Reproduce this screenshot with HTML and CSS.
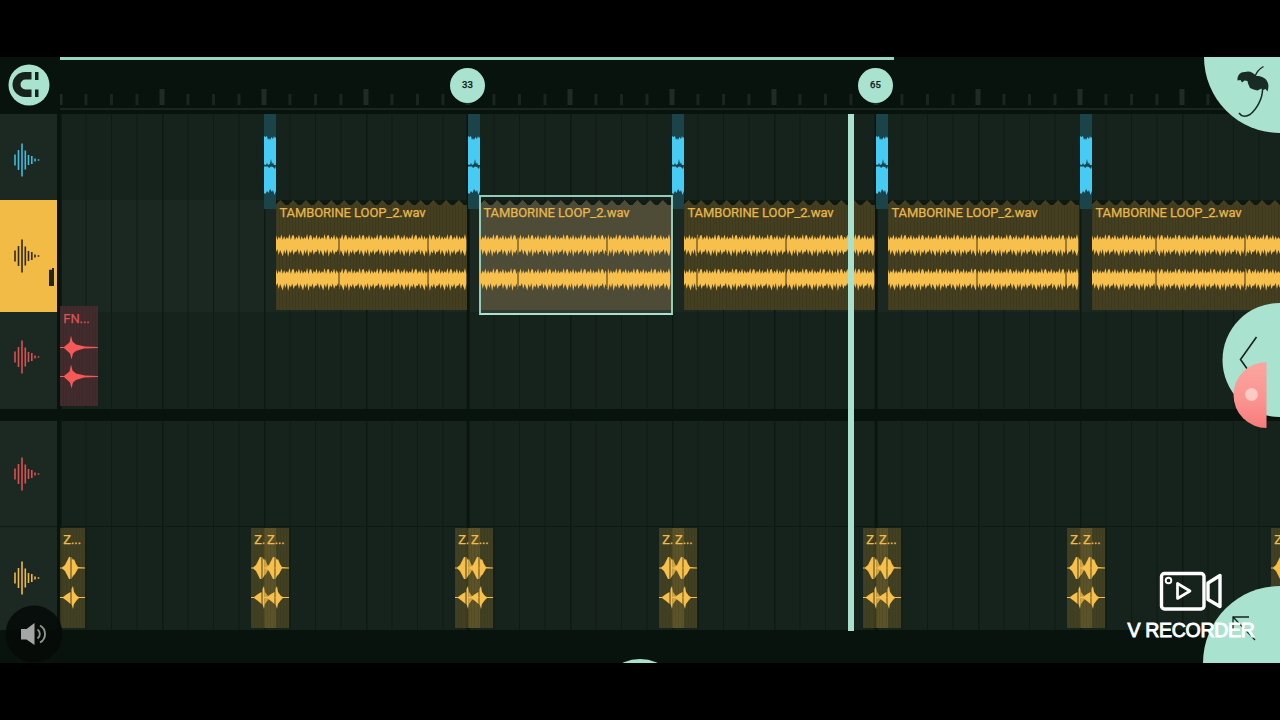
FILE: index.html
```html
<!DOCTYPE html>
<html>
    <head>
        <meta charset="utf-8">
        <title>Playlist</title>
        <link rel="stylesheet" href="styles.css">
    </head>
    <body>
        <div class="stage">
            <div class="ruler">
                <div class="corner">
                    <svg class="magnet" viewBox="0 0 42 42">
                        <circle cx="21" cy="21" r="20.5" fill="#a9e3d0"/>
                        <path d="M23.500 8H17A12.500 12.500 0 0 0 17 33H23.500V25.500H17.500A5 5 0 0 1 17.500 15.500H23.500ZM27 8H30.500V16H27ZM27 25.500H30.500V33H27Z" fill="#17221d"/>
                    </svg>
                </div>
                <div class="ticks">
                    <div class="songLength"></div>
                    <div class="marker first">33</div>
                    <div class="marker second">65</div>
                </div>
            </div>
            <div class="tracks">
                <div class="track hats">
                    <div class="head"></div>
                    <div class="lane"></div>
                </div>
                <div class="track tamborine">
                    <div class="head"><span class="level"></span></div>
                    <div class="lane"></div>
                </div>
                <div class="track fn">
                    <div class="head"></div>
                    <div class="lane"></div>
                </div>
                <div class="divider"></div>
                <div class="track empty">
                    <div class="head"></div>
                    <div class="lane"></div>
                </div>
                <div class="track zap">
                    <div class="head"></div>
                    <div class="lane"></div>
                </div>
                <div class="playhead"></div>
            </div>

            <svg class="overlay" viewBox="0 57 1280 606">
                <g fill="#a9e3d0">
                    <circle cx="1280" cy="57" r="76"/>
                    <circle cx="1279.500" cy="360" r="57"/>
                    <circle cx="1280" cy="663" r="77"/>
                    <circle cx="640" cy="701" r="42"/>
                </g>
                <!-- palm -->
                <path d="M1237.500 80.500C1237 75 1241 71.500 1245 72C1249 70.500 1253 72 1256 76C1261 75.500 1266 78 1267.500 82C1269 85 1268.500 88 1267.500 91.500L1265.500 89L1263 90L1261.500 88.500L1257.500 90.500L1253.500 89.500L1250 88L1248 83.500L1247.500 81L1244.500 80.500L1242 82.500L1240.500 80Z" fill="#1a2b25"/>
                <path d="M1255 77C1256 73 1259 69 1263.500 66.500" stroke="#1a2b25" stroke-width="1.400" fill="none"/>
                <path d="M1262.500 88C1263 99 1256 110 1250 114.500C1245 117.500 1241 116 1239 113" stroke="#1a2b25" stroke-width="1.500" fill="none"/>
                <!-- back arrow -->
                <path d="M1256.500 337L1240.500 359.500L1256.500 382" stroke="#14241d" stroke-width="1.600" fill="none"/>
                <!-- resize arrow -->
                <path d="M1233 630V617H1249M1233 617L1255 640" stroke="#14241d" stroke-width="1.300" fill="none"/>
                <!-- record bubble -->
                <defs>
                    <linearGradient id="pink" x1="0" y1="0" x2="0" y2="1">
                        <stop offset="0" stop-color="#fba59f"/>
                        <stop offset=".55" stop-color="#fb9591"/>
                        <stop offset="1" stop-color="#f77b7d"/>
                    </linearGradient>
                </defs>
                <path d="M1266.500 362A33 33 0 0 0 1266.500 428Z" fill="url(#pink)"/>
                <circle cx="1251.500" cy="394.500" r="6.500" fill="#ffc9c4"/>
                <!-- speaker -->
                <circle cx="34" cy="634" r="28.500" fill="#060a08" fill-opacity=".88"/>
                <path d="M21 629H26.500L34.500 623V645L26.500 639.500H21Z" fill="#a3a6a4"/>
                <path d="M37.500 629.500A5.500 5.500 0 0 1 37.500 638.500M40 625.500A9.700 9.700 0 0 1 40 642.500" stroke="#8f9391" stroke-width="1.900" fill="none"/>
                <!-- camera -->
                <g fill="none" stroke="#fff" stroke-width="3.400" stroke-linejoin="round">
                    <rect x="1161.500" y="573.500" width="42.500" height="35.500" rx="3"/>
                    <path d="M1208 583L1220 575.500V606.500L1208 599.500Z"/>
                    <path d="M1177.500 583.500V598.500L1190 591Z" stroke-width="2.700"/>
                    <circle cx="1168.500" cy="580.500" r="2.800" stroke-width="1.900"/>
                </g>
            </svg>
            <div class="watermark">V RECORDER</div>
        </div>

        <script type="text/javascript">
            var YELLOW = '#f7bf4c', BLUE = '#45cbf4', RED = '#f65757';

            function svg(w, h, body) {
                return '<svg width="' + w + '" height="' + h + '" viewBox="0 0 ' + w + ' ' + h + '">' + body + '</svg>';
            }

            function addClip(track, cls, left, html) {
                var clip = document.createElement('div');
                clip.className = 'clip ' + cls;
                clip.style.left = left + 'px';
                clip.innerHTML = html;
                document.querySelector('.' + track + ' .lane').appendChild(clip);
            }

            function headIcon() {
                var xs = [1, 4.5, 8, 11.3, 14.5, 17.8, 21, 24.5];
                var hs = [5.5, 10, 16.5, 9.5, 5, 4, 1.5, 0.7];
                return '<svg class="icon" width="27" height="34" viewBox="0 0 27 34"><path d="' + xs.map(function(x, i) {
                    return 'M' + x + ' ' + (17 - hs[i]) + 'v' + hs[i] * 2;
                }).join('') + '" stroke="currentColor" stroke-width="1.6"/></svg>';
            }

            // spiky band between up[] and down[] heights around a centre line
            function band(cy, width, core, up, down) {
                var top = 'M0 ' + cy, bottom = '';
                for (var x = 0, i = 0; x <= width; x += 1.35, i++) {
                    top += 'L' + x.toFixed(1) + ' ' + (cy - core - up[i % up.length]);
                    bottom = 'L' + x.toFixed(1) + ' ' + (cy + core + down[i % down.length]) + bottom;
                }
                return top + bottom + 'Z';
            }

            function tamborineWave(offset) {
                var up = [5, 0, 3.5, 1, 5.5, 0, 4, 0.5, 3, 1, 6, 0, 4.5];
                var down = [3, 0, 6, 1, 4, 7.5, 1, 5, 0, 8, 2, 4.5, 0.5, 6, 2.5];
                var body = '<path fill="' + YELLOW + '" d="' + band(44.5, 191, 4.5, up, down) + band(78.5, 191, 4.5, up, down) + '"/>';
                for (var x = offset; x < 191; x += 89) {
                    body += '<path d="M' + x + ' 36v18M' + x + ' 70v18" stroke="#3f3718" stroke-width="1"/>';
                }
                return svg(191, 110, body);
            }

            function hatWave() {
                return svg(12.4, 95, '<path fill="' + BLUE + '" d="M0 22L1.500 23L3 22L4 26L5 24L6 26L7.500 23L9 25L10 22L11 24L13 22V79L12 77L10.500 81L9 76L8 78L6 75L4.500 79L3 77L1.500 80L0 79Z"/>' +
                    '<path fill="#17444f" d="M0 50.500L2 51L3 49L4 51L6 50L7 45L8 50L9 48.500L10 51H13V53L12 52L11 55L9 53L7 52.500L5 54L4 52.500H0Z"/>');
            }

            function fnWave() {
                var shape = function(y) {
                    return 'M0 ' + (y - .5) + 'H4L7 ' + (y - 3) + 'L9.500 ' + (y - 5) + 'L11 ' + (y - 12) + 'L12.500 ' + (y - 6) + 'L16 ' + (y - 3) + 'L25 ' + (y - 1) + 'L38 ' + (y - .5) +
                        'V' + (y + .5) + 'L24 ' + (y + 1) + 'L16 ' + (y + 3.5) + 'L13 ' + (y + 6) + 'L11.500 ' + (y + 12) + 'L10 ' + (y + 6) + 'L4 ' + (y + .5) + 'H0Z';
                };
                return svg(37.5, 100, '<path fill="' + RED + '" d="' + shape(41.5) + shape(70.5) + '"/>');
            }

            function zapWave() {
                return svg(25, 100, '<path fill="' + YELLOW + '" d="M0 40.500H2L5 38L7 34L9 30L10.500 30V52L9 52L7 48L5 44L2 41.500H0Z' +
                    'M11.500 30L13 33L14 32L16 37L18 40L25.500 40.500V41.500H18L15 47L13 49L11.500 52Z' +
                    'M0 70H3L7 67L10.500 65V77L7 74L3 71H0ZM11.500 62L13 59L14 65L17 69L19 70H25.500V71H19L17 73L14 77L13 82L11.500 77Z"/>' +
                    '<path stroke="#a9842f" d="M10.900 33v16M10.900 66v10"/>');
            }

            var heads = document.querySelectorAll('.head');
            for (var i = 0; i < heads.length; i++) heads[i].innerHTML += headIcon();

            for (var bar = 1; bar <= 5; bar++) {
                addClip('hats', 'hat', bar * 204 - .4, hatWave());
                addClip('tamborine', 'loop' + (bar == 2 ? ' selected' : ''), bar * 204 + 12.1,
                    '<span>TAMBORINE LOOP_2.wav</span>' + tamborineWave([63, 38, 13, 89, 64][bar - 1]));
            }
            addClip('fn', 'vocal', 0, '<span>FN...</span>' + fnWave());
            addClip('zap', 'hit', 0, '<span>Z...</span>' + zapWave());
            for (var bar = 1; bar <= 6; bar++) {
                addClip('zap', 'hit', bar * 204 - 13, '<span>Z.</span>' + zapWave());
                // the last overlapping hit starts past the right edge
                if (bar < 6) addClip('zap', 'hit', bar * 204 - .3, '<span>Z...</span>' + zapWave());
            }
        </script>
    </body>
</html>
```

FILE: styles.css
```css
* {
    box-sizing: border-box;
}

body {
    margin: 0;
    padding: 57px 0;
    height: 720px;
    background: #000;
    font-family: Roboto, sans-serif;
    overflow: hidden;
}

.stage {
    position: relative;
    height: 606px;
    background: #09130e;
    overflow: hidden;
}

.ruler {
    display: flex;
    height: 57px;
}

.corner {
    width: 60px;
    padding: 7px 0 0 7.5px;
}

.magnet {
    display: block;
    width: 42px;
    height: 42px;
}

.ticks {
    position: relative;
    flex: 1;
    border-bottom: 3px solid #09130e;
    background:
        linear-gradient(#1a2520, #1a2520) 0 51px / 100% 2px no-repeat,
        linear-gradient(#09130e, #09130e) 0 32px / 3px 5px no-repeat,
        linear-gradient(90deg, #202b26 5px, transparent 5px) -2.5px 32px / 102px 16px repeat-x,
        linear-gradient(90deg, #1b2621 2.5px, transparent 2.5px) -1px 37px / 25.5px 11px repeat-x;
}

.songLength {
    width: 833.5px;
    height: 3px;
    background: #97d6c0;
}

.marker {
    position: absolute;
    top: 11px;
    width: 35px;
    height: 35px;
    border-radius: 50%;
    background: #a9e3d0;
    color: #17251e;
    font-size: 9.5px;
    font-weight: 500;
    line-height: 34px;
    text-align: center;
    -webkit-text-stroke: .25px #17251e;
}

.first {
    left: 390px;
}

.second {
    left: 798px;
}

.tracks {
    position: relative;
    display: flex;
    flex-direction: column;
}

.track {
    display: flex;
}

.hats {
    height: 86px;
    color: #45b9df;
}

.tamborine {
    height: 112px;
    color: #2c2b17;
}

.fn {
    height: 97px;
    color: #dd4f50;
}

.divider {
    height: 12px;
}

.empty {
    height: 105px;
    color: #dd4f50;
}

.zap {
    height: 104px;
    color: #efb947;
}

.head {
    position: relative;
    display: flex;
    align-items: center;
    width: 57px;
    margin-right: 3px;
    padding: 6px 0 0 14px;
    background: #1c2822;
}

.hats .head {
    padding-top: 5px;
}

.tamborine .head {
    padding-top: 0;
    background: #f2bb46;
}

.fn .head {
    padding: 0 0 8px 14px;
}

.empty .head,
.zap .head {
    padding-top: 0;
}

.zap .head {
    padding-bottom: 2px;
    border-top: 1px solid #121c17;
}

.level {
    position: absolute;
    right: 3px;
    bottom: 26px;
    width: 5px;
    height: 18px;
    background: #1d271d;
    clip-path: polygon(0 10%, 60% 10%, 60% 0, 100% 0, 100% 100%, 0 100%);
}

.lane {
    position: relative;
    flex: 1;
    background:
        linear-gradient(90deg, #0b150f 3px, transparent 3px) -1.5px 0 / 408px 100%,
        linear-gradient(90deg, #0d1711 1.5px, transparent 1.5px) .5px 0 / 102px 100%,
        linear-gradient(90deg, #0f1a14 1px, transparent 1px) 0 0 / 25.5px 100%,
        #16221c;
}

.tamborine .lane {
    background-color: #1b2721;
}

.zap .lane {
    border-top: 1px solid #0f1914;
}

.clip {
    position: absolute;
    z-index: 1;
}

.clip svg {
    display: block;
    position: absolute;
    top: 0;
    left: 0;
}

.clip span {
    position: absolute;
    left: 3.3px;
    top: 5px;
    font-size: 13px;
    line-height: 15px;
    letter-spacing: -.09px;
    white-space: nowrap;
    -webkit-text-stroke: .25px currentColor;
}

.hat {
    width: 12.4px;
    height: 95px;
    background: #1b434a;
}

.loop {
    width: 191px;
    height: 110px;
    color: #e8b84b;
}

/* torn top edge */
.loop::before {
    content: "";
    position: absolute;
    top: 0;
    left: 0;
    right: 0;
    bottom: 0;
    background:
        conic-gradient(from 135deg at 50% 0, #443f20 90deg, transparent 0) -2px 0 / 12.75px 5px repeat-x,
        linear-gradient(#443f20, #443f20) 0 5px / 100% 105px no-repeat,
        #0f1912;
}

.loop::after {
    content: "";
    position: absolute;
    top: 5px;
    left: 0;
    right: 0;
    bottom: 0;
    background: repeating-linear-gradient(90deg, rgba(0, 0, 0, .09) 0 1px, transparent 1px 3.2px);
}

.loop svg,
.loop span {
    z-index: 1;
}

.selected {
    z-index: 2;
}

.selected::before {
    background:
        conic-gradient(from 135deg at 50% 0, #4e4b37 90deg, transparent 0) -2px 0 / 12.75px 5px repeat-x,
        linear-gradient(#4e4b37, #4e4b37) 0 5px / 100% 105px no-repeat,
        #111c16;
}

.selected::after {
    top: -5px;
    left: -1.5px;
    right: -1.5px;
    bottom: -5px;
    border: 2px solid #93cdb8;
    border-bottom-color: #a9e3d0;
    background: none;
    box-shadow: inset 0 -3px #2e3a32;
}

.vocal {
    top: -6px;
    width: 37.5px;
    height: 100px;
    color: #dd5356;
    background: repeating-linear-gradient(90deg, rgba(0, 0, 0, .07) 0 1px, transparent 1px 3.2px) #422b2d;
}

.hit {
    top: 1px;
    width: 25px;
    height: 100px;
    color: #edbc4d;
    background: repeating-linear-gradient(90deg, rgba(0, 0, 0, .06) 0 1px, transparent 1px 3.2px) rgba(140, 118, 50, .36);
}

.hit span {
    top: 4px;
}

.hit svg {
    top: -.7px;
}

.playhead {
    position: absolute;
    z-index: 3;
    left: 848px;
    top: 0;
    width: 5.5px;
    height: 517px;
    background: #a9e0ce;
}

.overlay {
    position: absolute;
    z-index: 4;
    top: 0;
    left: 0;
    width: 1280px;
    height: 606px;
}

.watermark {
    position: absolute;
    z-index: 5;
    left: 1127.5px;
    top: 561px;
    color: #fff;
    font-family: "Liberation Sans", sans-serif;
    font-size: 19.5px;
    letter-spacing: -.3px;
    line-height: 24px;
    -webkit-text-stroke: .9px #fff;
    white-space: nowrap;
}
```
